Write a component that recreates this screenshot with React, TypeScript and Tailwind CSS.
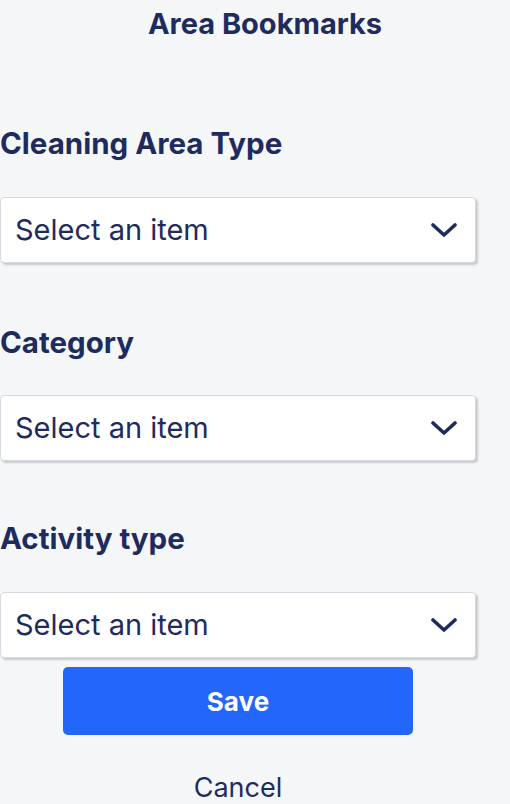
const labels = ["Cleaning Area Type", "Category", "Activity type"]

function SelectBox() {
  return (
    <div className="flex h-[66px] w-[476px] items-center justify-between rounded-[4px] border border-[#d5d9e0] bg-white pl-[14px] pr-[16px] shadow-[2px_2px_2px_rgba(0,0,0,0.18)]">
      <span className="text-[29px] text-[#1e2b5e]">Select an item</span>
      <svg width="26" height="16" viewBox="0 0 26 16" fill="none" className="mr-[2px]">
        <path d="M2 3 L13 13 L24 3" stroke="#1e2b5e" strokeWidth="3.6" strokeLinecap="round" strokeLinejoin="round" />
      </svg>
    </div>
  )
}

export default function App() {
  return (
    <div className="min-h-[804px] w-[510px] overflow-hidden bg-[#f5f6f8] font-['Inter','Liberation_Sans',sans-serif] text-[#1e2b5e]">
      <h1 className="mt-[7px] pl-[20px] text-center text-[29px] font-bold leading-[34px]">Area Bookmarks</h1>

      <div className="mt-[85px] w-[476px]">
        <label className="block text-[29.5px] font-bold leading-[34px]">{labels[0]}</label>
        <div className="mt-[37px]">
          <SelectBox />
        </div>

        <label className="mt-[62px] block text-[29.5px] font-bold leading-[34px]">{labels[1]}</label>
        <div className="mt-[36px]">
          <SelectBox />
        </div>

        <label className="mt-[60px] block text-[29.5px] font-bold leading-[34px]">{labels[2]}</label>
        <div className="mt-[37px]">
          <SelectBox />
        </div>

        <div className="mt-[9px] flex justify-center">
          <button className="h-[68px] w-[350px] rounded-[5px] bg-[#2366fb] text-[26px] font-bold text-white">
            Save
          </button>
        </div>

        <div className="mt-[36px] text-center text-[27px] leading-[34px]">Cancel</div>
      </div>
    </div>
  )
}
